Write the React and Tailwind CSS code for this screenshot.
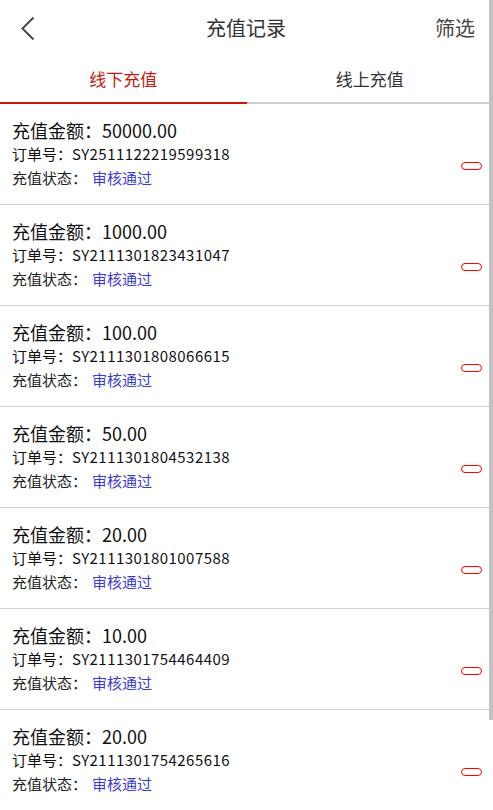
import React from 'react';

const records = [
    { amount: '50000.00', order: 'SY2511122219599318' },
    { amount: '1000.00', order: 'SY2111301823431047' },
    { amount: '100.00', order: 'SY2111301808066615' },
    { amount: '50.00', order: 'SY2111301804532138' },
    { amount: '20.00', order: 'SY2111301801007588' },
    { amount: '10.00', order: 'SY2111301754464409' },
    { amount: '20.00', order: 'SY2111301754265616' },
];

const font = { fontFamily: '"Noto Sans CJK SC", "Noto Sans", sans-serif' };

const App = () => {
    return (
        <div style={font} className="relative h-[810px] overflow-hidden bg-white">
            {/* Header */}
            <header className="h-14 flex items-center justify-between pl-[20px] pr-[18px] text-[#333]">
                <button className="w-[20px] h-[30px] flex items-center">
                    <svg width="15" height="25" viewBox="0 0 15 25" fill="none">
                        <polyline points="13.5,1.5 2.5,12.5 13.5,23.5" stroke="#484848" strokeWidth="2" />
                    </svg>
                </button>
                <h1 className="text-[20px] leading-none ml-[17px]">充值记录</h1>
                <button className="text-[20px] leading-none text-[#444]">筛选</button>
            </header>

            {/* Tabs */}
            <div className="flex h-[48px] border-b-2 border-[#cfcfcf]">
                <div className="flex-1 flex items-center justify-center text-[17px] text-[#c9190b] border-b-2 border-[#c51a0a] -mb-[2px]">
                    线下充值
                </div>
                <div className="flex-1 flex items-center justify-center text-[17px] text-[#333]">线上充值</div>
            </div>

            {/* List */}
            <div className="mr-[4px]">
                {records.map((r, idx) => (
                    <div key={idx} className="flex border-b border-[#d2d2d2] pl-3 pr-[7px] pt-[14px] pb-[14px]">
                        <div className="flex-1 text-[#111]">
                            <p className="text-[18px] leading-[24px]">充值金额：{r.amount}</p>
                            <p className="text-[15px] leading-[24px]">
                                订单号：<span className="tracking-[0.45px]">{r.order}</span>
                            </p>
                            <p className="text-[15px] leading-[24px] text-[#222]">
                                充值状态：<span className="ml-[5px] text-[#3a3ad6]">审核通过</span>
                            </p>
                        </div>
                        <div className="mt-[44px] w-[21px] h-[8px] rounded-[4px] border-[1.5px] border-[#f00]"></div>
                    </div>
                ))}
            </div>

            {/* scrollbar thumb */}
            <div className="absolute right-0 top-0 w-[4px] h-[720px] bg-[#c1c1c1]"></div>
        </div>
    );
};

export default App;
